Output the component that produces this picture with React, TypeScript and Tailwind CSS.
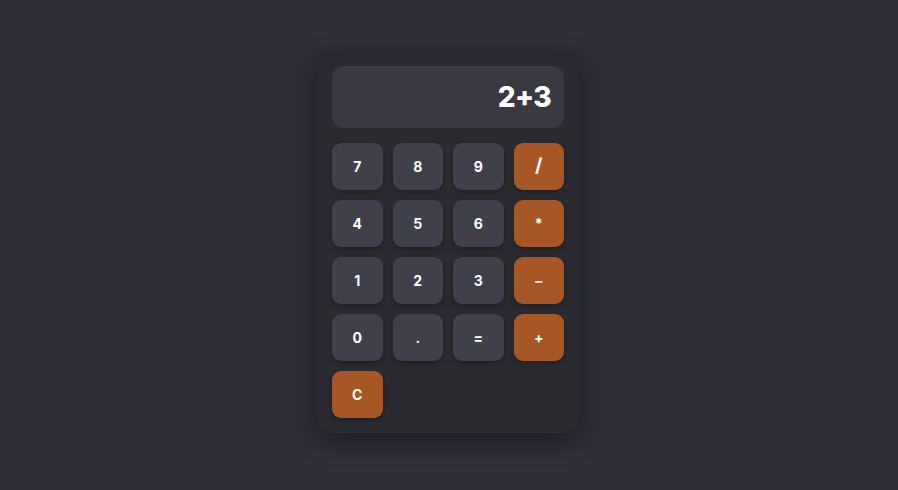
import React from "react";

const keys = [
  { label: "7" }, { label: "8" }, { label: "9" }, { label: "/", op: true, big: true },
  { label: "4" }, { label: "5" }, { label: "6" }, { label: "*", op: true },
  { label: "1" }, { label: "2" }, { label: "3" }, { label: "-", op: true },
  { label: "0" }, { label: "." }, { label: "=" }, { label: "+", op: true },
  { label: "C", op: true },
];

const App = () => {
  return (
    <div
      className="flex h-[490px] w-full items-start justify-center bg-[#2e2f37] pt-[51px]"
      style={{ fontFamily: "Inter, 'Noto Sans', sans-serif" }}
    >
      <div className="mr-[2px] w-[262px] rounded-[15px] bg-[#2a2b31] p-[15px] shadow-[0_8px_24px_rgba(0,0,0,0.35)]">
        {/* Display */}
        <div className="flex h-[62px] items-center justify-end rounded-[12px] bg-[#383941] px-[13px]">
          <span className="text-[28px] font-extrabold tracking-tight text-white">2+3</span>
        </div>

        {/* Keys */}
        <div className="mt-[15px] grid grid-cols-4 gap-[10px]">
          {keys.map((k) => (
            <button
              key={k.label}
              className={
                "flex h-[47px] items-center justify-center rounded-[9px] font-bold text-white shadow-[0_2px_4px_rgba(0,0,0,0.3)] " +
                (k.op ? "bg-[#a65725] " : "bg-[#3f4049] ") +
                (k.big ? "text-[19px]" : "text-[14px]")
              }
            >
              {k.label === "-" ? "–" : k.label}
            </button>
          ))}
        </div>
      </div>
    </div>
  );
};

export default App;
